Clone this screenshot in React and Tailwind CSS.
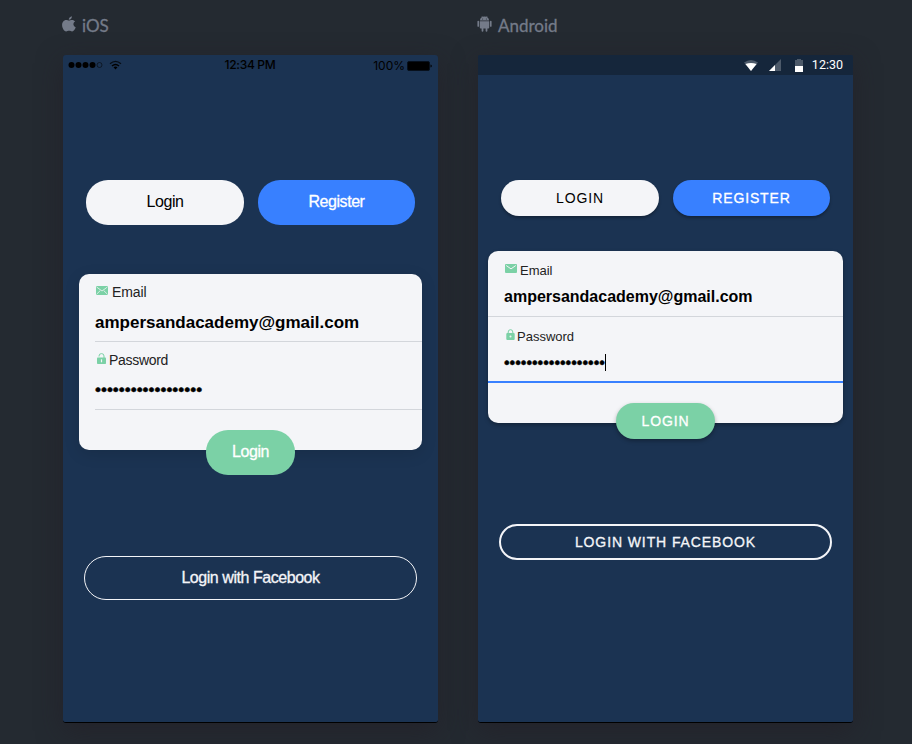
import React from "react";

const BULLETS = "•".repeat(18);

function AppleIcon() {
  return (
    <svg className="-ml-px mb-[2px] h-[16px] w-[14px] shrink-0" viewBox="0 0 14 16.500" preserveAspectRatio="none" fill="#747b89">
      <path d="M9.900 0.200C10.100 1.900 8.700 3.800 6.800 3.900 6.600 2.100 8.200 0.400 9.900 0.200Z" />
      <path d="M7 4.700C7.800 4.700 8.600 4 10 4c1.300 0 2.400.6 3.100 1.600-2.500 1.500-2.100 4.900.6 5.900-.6 1.800-2 4.400-3.600 4.400-1.200 0-1.600-.7-3-.7s-1.900.7-3 .7C2 15.900.1 12.600.1 9.400.1 6.200 2 4 4.100 4 5.400 4 6.200 4.700 7 4.700Z" />
    </svg>
  );
}

function AndroidIcon() {
  return (
    <svg className="-ml-px mb-[2px] h-[16px] w-[15px] shrink-0" viewBox="0 0 15 16" fill="#747b89">
      <path d="M3 4.600C3 2.700 4 1.600 5.200 1L4.500.2l.4-.2.8.8a5.500 5.500 0 0 1 3.600 0L10.100 0l.4.2L9.800 1C11 1.600 12 2.700 12 4.600Z" />
      <path d="M2.800 5.200h9.400v6.500a.8.8 0 0 1-.8.8H10.400v2.300a.9.9 0 0 1-1.800 0V12.500H6.400v2.300a.9.9 0 0 1-1.800 0V12.500H3.600a.8.8 0 0 1-.8-.8Z" />
      <rect x="0.400" y="4.800" width="1.700" height="6" rx=".85" />
      <rect x="12.900" y="4.800" width="1.700" height="6" rx=".85" />
      <circle cx="5.600" cy="2.900" r=".5" fill="#242a31" />
      <circle cx="9.400" cy="2.900" r=".5" fill="#242a31" />
    </svg>
  );
}

function IosStatusBar() {
  return (
    <div className="flex h-5 items-center justify-between pl-[5px] pr-[6px] font-['Inter',sans-serif] text-[12px] text-black">
      <div className="flex w-[120px] items-center gap-[5px]">
        <svg className="h-[8px] w-[36px]" viewBox="0 0 36 8">
          <circle cx="3.500" cy="4" r="3" />
          <circle cx="10.500" cy="4" r="3" />
          <circle cx="17.500" cy="4" r="3" />
          <circle cx="24.500" cy="4" r="3" />
          <circle cx="31.500" cy="4" r="2.500" fill="none" stroke="#0a111c" strokeWidth=".8" />
        </svg>
        <svg className="h-[10px] w-[13px]" viewBox="0 0 13 10" fill="none" stroke="#000">
          <path d="M1 3.800Q6.500-1 12 3.800" strokeWidth="1.300" opacity=".75" />
          <path d="M3 6Q6.500 3 10 6" strokeWidth="1.500" />
          <path d="M4.500 7.300Q6.500 5.800 8.500 7.300L6.500 9.500Z" fill="#000" stroke="none" />
        </svg>
      </div>
      <span className="font-medium tracking-[-0.300px]">12:34 PM</span>
      <div className="flex w-[120px] items-center justify-end gap-[2px] pt-px">
        <span>100%</span>
        <svg className="h-[10px] w-[25px]" viewBox="0 0 25 10">
          <rect x=".5" y=".5" width="22" height="9" rx="1.500" fill="#000" stroke="#07101c" />
          <path d="M23.500 3.500v3q1.300-.4 1.300-1.500t-1.300-1.500Z" />
        </svg>
      </div>
    </div>
  );
}

function AndroidStatusBar() {
  return (
    <div className="flex h-5 items-center justify-end rounded-t-[2px] bg-[#15263b] pr-[10px] text-white">
      <svg className="mr-[11px] h-[11px] w-[14px]" viewBox="0 0 14 11">
        <path d="M0 2.500Q7-2.500 14 2.500L7 11Z" fill="#4d5a6a" />
        <path d="M1.400 4Q7 1.800 12.600 4L7 10.900Z" fill="#fff" />
      </svg>
      <svg className="mr-[14px] h-[12px] w-[12px]" viewBox="0 0 12 12">
        <path d="M0 12 12 0V12Z" fill="#4d5a6a" />
        <path d="M0 12 6 6V12Z" fill="#fff" />
      </svg>
      <svg className="mr-[9px] h-[13px] w-[8px]" viewBox="0 0 8 13">
        <path d="M2 0h4v1h2v6H0V1h2Z" fill="#4d5a6a" />
        <path d="M0 7h8v6H0Z" fill="#fff" />
      </svg>
      <span className="pt-px font-['Roboto',sans-serif] text-[12.500px]">12:30</span>
    </div>
  );
}

function IosMail() {
  return (
    <svg className="h-[9px] w-[12px]" viewBox="0 0 12 9">
      <rect width="12" height="9" rx="1" fill="#7bd1a6" />
      <path d="M.6 1 6 5 11.400 1M.6 8.200 4.300 4.500M11.400 8.200 7.700 4.500" fill="none" stroke="#f4f5f8" strokeWidth=".8" />
    </svg>
  );
}

function AndroidMail() {
  return (
    <svg className="h-[9px] w-[12px]" viewBox="0 0 12 9">
      <rect width="12" height="9" rx="1" fill="#7bd1a6" />
      <path d="M1.200 1.500 6 4.900 10.800 1.500" fill="none" stroke="#f4f5f8" strokeWidth="1" />
    </svg>
  );
}

function IosLock() {
  return (
    <svg className="h-[11px] w-[9px]" viewBox="0 0 9 11">
      <path d="M2 3.500V3Q2 .6 4.500.6T7 3V5" fill="none" stroke="#7bd1a6" strokeWidth="1" />
      <rect y="4.500" width="9" height="6.500" rx=".8" fill="#7bd1a6" />
      <path d="M4.500 6.300v3" stroke="#f4f5f8" strokeWidth="1.200" />
    </svg>
  );
}

function AndroidLock() {
  return (
    <svg className="h-[11px] w-[9px]" viewBox="0 0 9 11">
      <path d="M2.200 5V3Q2.200.7 4.500.7T6.800 3V5" fill="none" stroke="#7bd1a6" strokeWidth="1" />
      <rect x=".3" y="4" width="8.400" height="7" rx="1" fill="#7bd1a6" />
      <circle cx="4.500" cy="7.400" r="1" fill="#f4f5f8" />
    </svg>
  );
}

function Phone({ icon, name, children }) {
  return (
    <section className="w-[375px]">
      <h2 className="flex h-[55px] items-center pb-[5px] font-['Lato',sans-serif] text-[17px] text-[#747b89] [-webkit-text-stroke:0.300px_#747b89]">
        {icon}
        <span className="ml-[6px] mt-px">{name}</span>
      </h2>
      <div className="h-[668px] rounded-[3px] border-b border-black bg-[#1b3352] shadow-[0_8px_26px_rgba(35,30,38,0.6)]">
        {children}
      </div>
    </section>
  );
}

function IosScreen() {
  return (
    <Phone icon={<AppleIcon />} name="iOS">
      <IosStatusBar />
      <div className="ml-[23px] mt-[105px] flex gap-[14px] text-[16px] tracking-[-0.450px]">
        <button className="h-[45px] w-[158px] rounded-[22px] bg-[#f4f5f8] pb-[2px] text-black">Login</button>
        <button className="h-[45px] w-[157px] rounded-[22px] bg-[#3880ff] pb-[2px] text-white [-webkit-text-stroke:0.300px_white]">Register</button>
      </div>
      <div className="ml-4 mt-[49px] flex h-[176px] w-[343px] flex-col rounded-[10px] bg-[#f4f5f8] pl-4 shadow-[0_4px_16px_rgba(0,0,0,0.120)]">
        <div className="h-[68px] shrink-0 border-b border-[#d3d6db]">
          <label className="flex h-[36px] items-center pl-px text-[14px] text-[#222]">
            <span className="mb-[3px] mr-[4px]"><IosMail /></span>
            <span className="tracking-[-0.100px]">Email</span>
          </label>
          <div className="text-[17px] font-bold leading-[25px] text-black">ampersandacademy@gmail.com</div>
        </div>
        <div className="h-[68px] shrink-0 border-b border-[#d3d6db]">
          <label className="flex h-[36px] items-center pl-[2px] text-[14px] text-[#222]">
            <span className="mb-[3px] mr-[3px]"><IosLock /></span>
            <span className="tracking-[-0.300px]">Password</span>
          </label>
          <div className="text-[17px] leading-[23px] text-black [-webkit-text-stroke:0.500px_black]">{BULLETS}</div>
        </div>
        <button className="ml-[111px] mt-5 h-[45px] w-[89px] shrink-0 rounded-[22px] bg-[#7bd1a6] pb-[2px] text-[16px] tracking-[-0.450px] text-white [-webkit-text-stroke:0.300px_white]">Login</button>
      </div>
      <button className="ml-[21px] mt-[106px] h-[44px] w-[333px] rounded-[22px] border border-[#f4f5f8] text-[16px] tracking-[-0.450px] text-[#f4f5f8] [-webkit-text-stroke:0.300px_#f4f5f8]">
        Login with Facebook
      </button>
    </Phone>
  );
}

function AndroidScreen() {
  return (
    <Phone icon={<AndroidIcon />} name="Android">
      <AndroidStatusBar />
      <div className="ml-[23px] mt-[105px] flex gap-[14px] text-[14px] tracking-[0.840px]">
        <button className="h-[36px] w-[158px] rounded-[18px] bg-[#f4f5f8] text-black shadow-[0_2px_3px_rgba(0,0,0,0.300)]">LOGIN</button>
        <button className="h-[36px] w-[157px] rounded-[18px] bg-[#3880ff] text-white shadow-[0_2px_3px_rgba(0,0,0,0.300)] [-webkit-text-stroke:0.300px_white]">REGISTER</button>
      </div>
      <div className="ml-[10px] mt-[35px] flex h-[172px] w-[355px] flex-col rounded-[10px] bg-[#f4f5f8] shadow-[0_2px_4px_rgba(0,0,0,0.300)]">
        <div className="h-[66px] shrink-0 border-b border-[#d3d6db] pl-4">
          <label className="flex h-[38px] items-center pl-px pt-px text-[13px] text-[#222]">
            <span className="mb-[4px] mr-[3px]"><AndroidMail /></span>
            Email
          </label>
          <div className="text-[16px] font-bold leading-[16px] text-black">ampersandacademy@gmail.com</div>
        </div>
        <div className="h-[66px] shrink-0 border-b-2 border-[#3880ff] pl-4">
          <label className="flex h-[37px] items-center pl-[2px] pt-[2px] text-[13px] text-[#222]">
            <span className="mb-[4px] mr-[2px]"><AndroidLock /></span>
            Password
          </label>
          <div className="flex h-[17px] items-center text-[16px] text-black">
            <span className="leading-[17px] [-webkit-text-stroke:0.500px_black]">{BULLETS}</span>
            <span className="h-[17px] w-px bg-black" />
          </div>
        </div>
        <button className="ml-[128px] mt-5 h-[36px] w-[99px] shrink-0 rounded-[18px] bg-[#7bd1a6] text-[14px] tracking-[0.840px] text-white shadow-[0_2px_4px_rgba(0,0,0,0.300)] [-webkit-text-stroke:0.300px_white]">LOGIN</button>
      </div>
      <button className="ml-[21px] mt-[101px] h-[36px] w-[333px] rounded-[18px] border-2 border-[#f4f5f8] text-[14px] tracking-[0.900px] text-[#f4f5f8] [-webkit-text-stroke:0.300px_#f4f5f8]">
        LOGIN WITH FACEBOOK
      </button>
    </Phone>
  );
}

export default function App() {
  return (
    <main className="flex h-[744px] w-[912px] gap-10 overflow-hidden bg-[#242a31] pl-[63px] font-['Liberation_Sans',Arial,sans-serif]">
      <IosScreen />
      <AndroidScreen />
    </main>
  );
}
